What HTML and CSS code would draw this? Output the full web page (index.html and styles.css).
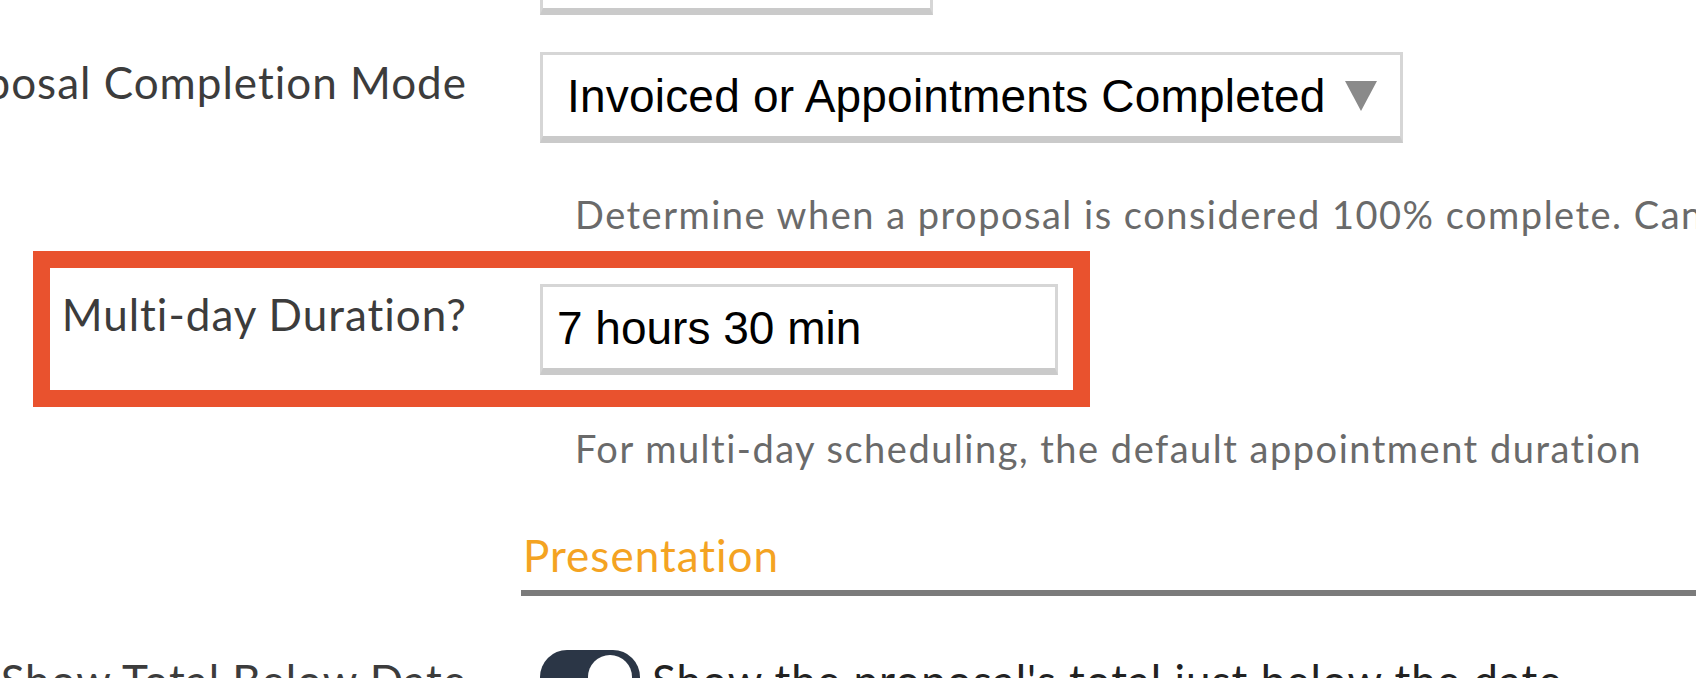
FILE: index.html
```html
<!DOCTYPE html>
<html lang="en">
<head>
<meta charset="utf-8">
<title>Proposal Settings</title>
<link rel="stylesheet" href="styles.css">
</head>
<body>
<div class="settings">
  <div class="field field-first">
    <div class="field-label"></div>
    <div class="field-control"><div class="text-input text-input-short"></div></div>
  </div>

  <div class="field">
    <div class="field-label">Proposal Completion Mode</div>
    <div class="field-control">
      <div class="select">
        <span class="select-value">Invoiced or Appointments Completed</span>
        <svg class="select-arrow" width="32" height="30" viewBox="0 0 32 30"><polygon points="0,0 32,0 16,30" fill="#8a8a8a"/></svg>
      </div>
    </div>
  </div>
  <div class="help">Determine when a proposal is considered 100% complete. Can be changed per proposal</div>

  <div class="field field-highlighted">
    <div class="field-label">Multi-day Duration?</div>
    <div class="field-control"><div class="text-input text-input-mid">7 hours 30 min</div></div>
    <div class="highlight"></div>
  </div>
  <div class="help">For multi-day scheduling, the default appointment duration</div>

  <div class="section-title">Presentation</div>

  <div class="field field-toggle">
    <div class="field-label">Show Total Below Date</div>
    <div class="field-control toggle-control">
      <span class="toggle"><span class="toggle-knob"></span></span>
      <span class="toggle-text">Show the proposal's total just below the date</span>
    </div>
  </div>
</div>
</body>
</html>
```

FILE: styles.css
```css
* { box-sizing: border-box; }
html, body { margin: 0; padding: 0; background: #fff; }
body { width: 1696px; height: 678px; overflow: hidden; }

.settings {
  margin-top: -76px;
  font-family: Lato, "Open Sans", sans-serif;
}

.field {
  display: grid;
  grid-template-columns: 540px 1fr;
  position: relative;
}
.field-first { margin-bottom: 37px; }

.field-label {
  display: flex;
  justify-content: flex-end;
  padding-right: 73px;
  padding-top: 5px;
  white-space: nowrap;
  font-size: 44px;
  letter-spacing: 1px;
  line-height: 50px;
  color: #3c3c3c;
}

.text-input {
  height: 91px;
  border: 3px solid #d6d6d6;
  border-bottom: 7px solid #cacaca;
  background: #fff;
  display: flex;
  align-items: center;
  padding: 0 14px;
  font-family: "Liberation Sans", Arial, sans-serif;
  font-size: 46px;
  color: #000;
  white-space: nowrap;
}
.text-input-short { width: 393px; }
.text-input-mid { width: 518px; }

.select {
  height: 91px;
  width: 863px;
  border: 3px solid #d6d6d6;
  border-bottom: 7px solid #cacaca;
  background: #fff;
  display: flex;
  align-items: center;
  padding: 0 22px 0 24px;
  font-family: "Liberation Sans", Arial, sans-serif;
  font-size: 46px;
  color: #000;
  white-space: nowrap;
}
.select-value { letter-spacing: 0.2px; }
.select-arrow { margin-left: 19px; flex: none; }

.help {
  margin: 46px 0 45px 575px;
  font-size: 38px;
  letter-spacing: 1.5px;
  line-height: 50px;
  color: #6a6a6a;
  white-space: nowrap;
}
.field-highlighted + .help { margin-top: 48px; margin-bottom: 57px; }

.highlight {
  position: absolute;
  left: 33px;
  top: -33px;
  width: 1057px;
  height: 156px;
  border: 17px solid #e9522e;
  pointer-events: none;
}

.section-title {
  margin-left: 521px;
  padding-left: 2px;
  padding-bottom: 10px;
  border-bottom: 6px solid #7b7b7b;
  font-size: 44px;
  letter-spacing: 1px;
  line-height: 50px;
  color: #f4a322;
  margin-bottom: 54px;
}

.toggle-control {
  display: flex;
  align-items: flex-start;
  gap: 12px;
}
.toggle {
  position: relative;
  flex: none;
  width: 100px;
  height: 54px;
  border-radius: 27px;
  background: #2b3646;
}
.toggle-knob {
  position: absolute;
  top: 5px;
  right: 8px;
  width: 44px;
  height: 44px;
  border-radius: 50%;
  background: #fff;
}
.toggle-text {
  font-size: 44px;
  letter-spacing: 1px;
  line-height: 50px;
  padding-top: 5px;
  color: #222;
  white-space: nowrap;
}
```
